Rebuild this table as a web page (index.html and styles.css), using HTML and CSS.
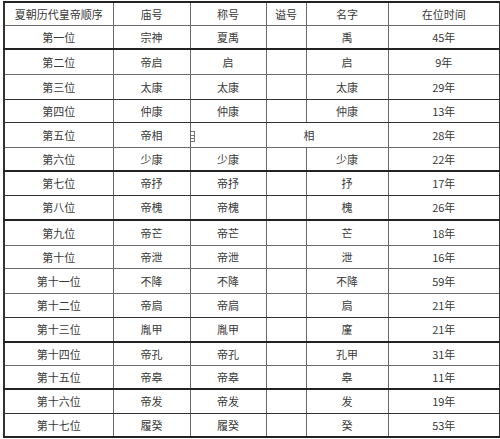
FILE: index.html
```html
<!DOCTYPE html>
<html lang="zh">
<head>
<meta charset="utf-8">
<link rel="stylesheet" href="styles.css">
</head>
<body>
<table class="tbl">
<colgroup>
<col class="c1"><col class="c2"><col class="c3"><col class="c4"><col class="c5"><col class="c6">
</colgroup>
<tr class="p23"><td>夏朝历代皇帝顺序</td><td>庙号</td><td>称号</td><td>谥号</td><td>名字</td><td>在位时间</td></tr>
<tr class="p24 thick"><td>第一位</td><td>宗神</td><td>夏禹</td><td></td><td>禹</td><td>45年</td></tr>
<tr class="p25"><td>第二位</td><td>帝启</td><td>启</td><td></td><td>启</td><td>9年</td></tr>
<tr class="p25 mid"><td>第三位</td><td>太康</td><td>太康</td><td></td><td>太康</td><td>29年</td></tr>
<tr class="p23 mid"><td>第四位</td><td>仲康</td><td>仲康</td><td></td><td>仲康</td><td>13年</td></tr>
<tr class="p25"><td>第五位</td><td>帝相</td><td class="frag-cell"><span class="frag"></span></td><td colspan="2" class="merged">相</td><td>28年</td></tr>
<tr class="p24 thick"><td>第六位</td><td>少康</td><td>少康</td><td></td><td>少康</td><td>22年</td></tr>
<tr class="p24 mid"><td>第七位</td><td>帝抒</td><td>帝抒</td><td></td><td>抒</td><td>17年</td></tr>
<tr class="p25 thick"><td>第八位</td><td>帝槐</td><td>帝槐</td><td></td><td>槐</td><td>26年</td></tr>
<tr class="p25"><td>第九位</td><td>帝芒</td><td>帝芒</td><td></td><td>芒</td><td>18年</td></tr>
<tr class="p23"><td>第十位</td><td>帝泄</td><td>帝泄</td><td></td><td>泄</td><td>16年</td></tr>
<tr class="p25"><td>第十一位</td><td>不降</td><td>不降</td><td></td><td>不降</td><td>59年</td></tr>
<tr class="p24 mid"><td>第十二位</td><td>帝扃</td><td>帝扃</td><td></td><td>扃</td><td>21年</td></tr>
<tr class="p25 thick"><td>第十三位</td><td>胤甲</td><td>胤甲</td><td></td><td>廑</td><td>21年</td></tr>
<tr class="p23"><td>第十四位</td><td>帝孔</td><td>帝孔</td><td></td><td>孔甲</td><td>31年</td></tr>
<tr class="p24 thick"><td>第十五位</td><td>帝皋</td><td>帝皋</td><td></td><td>皋</td><td>11年</td></tr>
<tr class="p24 mid"><td>第十六位</td><td>帝发</td><td>帝发</td><td></td><td>发</td><td>19年</td></tr>
<tr class="p24 thick"><td>第十七位</td><td>履癸</td><td>履癸</td><td></td><td>癸</td><td>53年</td></tr>
</table>
</body>
</html>
```
FILE: styles.css
```css
html, body {
  margin: 0;
  padding: 0;
  background: #ffffff;
}
body {
  padding: 1px 0 0 3px;
}
.tbl {
  border-collapse: collapse;
  table-layout: fixed;
  width: 496px;
  font-family: "Noto Sans CJK SC", "Liberation Sans", sans-serif;
  font-size: 11px;
  color: #3a3a3a;
  border-top: 2px solid #222;
  border-left: 2px solid #333;
  border-right: 2px solid #333;
}
.c1 { width: 109px; }
.c2 { width: 77px; }
.c3 { width: 76px; }
.c4 { width: 40px; }
.c5 { width: 82px; }
.c6 { width: 112px; }
.tbl td {
  border: 1px solid #6a6a6a;
  text-align: center;
  vertical-align: middle;
  padding: 0;
  line-height: 13px;
  white-space: nowrap;
}
.p23 td { height: 22px; }
.p24 td { height: 23px; }
.p25 td { height: 24px; }
.p23.thick td { height: 21px; }
.p24.thick td { height: 22px; }
.p25.thick td { height: 23px; }
.tbl tr.thick td { border-bottom: 2px solid #222; }
.tbl tr.mid td { border-bottom: 1.5px solid #333; }
.frag-cell {
  text-align: left !important;
}
.frag {
  display: inline-block;
  vertical-align: middle;
  width: 3px;
  height: 9px;
  border: 1px solid #777;
  border-left: none;
  background: linear-gradient(#777, #777) 0 3px / 100% 1px no-repeat,
              linear-gradient(#777, #777) 0 6px / 100% 1px no-repeat;
}
.merged {
  text-align: left !important;
  padding-left: 37px !important;
}
```
